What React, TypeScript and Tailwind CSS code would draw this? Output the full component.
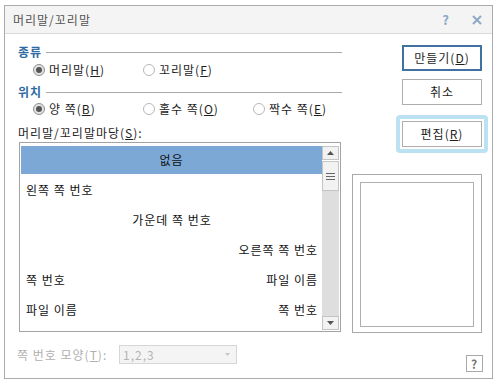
import React from 'react'

const font = { fontFamily: '"Noto Sans CJK KR", "Noto Sans", sans-serif' }

function Radio({ checked, label }: { checked?: boolean; label: React.ReactNode }) {
  return (
    <div className="w-[110px] shrink-0 flex items-center h-[16px]">
      <span
        className={
          'w-[12px] h-[12px] rounded-full border flex items-center justify-center ' +
          (checked ? 'border-[#8f8f8f] bg-[#e2e2e2]' : 'border-[#b8b8b8] bg-white')
        }
      >
        {checked && <span className="w-[6px] h-[6px] rounded-full bg-[#555555]" />}
      </span>
      <span className="ml-[4px] text-[12px] leading-[16px] text-[#1e1e1e]">{label}</span>
    </div>
  )
}

function Section({ title }: { title: string }) {
  return (
    <div className="flex items-center h-[14px]">
      <span className="text-[12px] leading-[14px] font-bold text-[#2f6aa3]">{title}</span>
      <span className="flex-1 h-px bg-[#a8a8a8] ml-[4px]" />
    </div>
  )
}

function Button({ children, primary }: { children: React.ReactNode; primary?: boolean }) {
  return (
    <div
      className={
        'w-[80px] h-[26px] flex items-center justify-center bg-white text-[12px] text-[#1e1e1e] ' +
        (primary ? 'border-2 border-[#41729f]' : 'border border-[#adadad]')
      }
    >
      {children}
    </div>
  )
}

const items: { text: string; align: 'left' | 'center' | 'right' | 'both'; right?: string }[] = [
  { text: '왼쪽 쪽 번호', align: 'left' },
  { text: '가운데 쪽 번호', align: 'center' },
  { text: '오른쪽 쪽 번호', align: 'right' },
  { text: '쪽 번호', align: 'both', right: '파일 이름' },
  { text: '파일 이름', align: 'both', right: '쪽 번호' },
]

export default function App() {
  return (
    <div className="w-[501px] h-[385px] bg-white pt-[5px] pl-[4px] tracking-[1px]" style={font}>
      <div className="w-[489px] h-[374px] border border-[#ababab] flex flex-col">
        {/* Title bar */}
        <div className="h-[28px] bg-[#f4f4f4] border-b border-[#dadada] flex items-center pl-[8px]">
          <span className="text-[12px] text-[#555555]">머리말/꼬리말</span>
          <span className="ml-auto text-[13px] font-bold text-[#8ca8c6]">?</span>
          <svg className="ml-[22px] mr-[10px]" width="10" height="10" viewBox="0 0 10 10">
            <path d="M1 1 L9 9 M9 1 L1 9" stroke="#8ca8c6" strokeWidth="2" />
          </svg>
        </div>

        {/* Body */}
        <div className="flex flex-1">
          {/* Left column */}
          <div className="ml-[13px] w-[324px] flex flex-col">
            <div className="mt-[11px]">
              <Section title="종류" />
            </div>
            <div className="mt-[3px] pl-[15px] flex">
              <Radio checked label={<>머리말(<u>H</u>)</>} />
              <Radio label={<>꼬리말(<u>F</u>)</>} />
            </div>
            <div className="mt-[7px]">
              <Section title="위치" />
            </div>
            <div className="mt-[2px] pl-[15px] flex">
              <Radio checked label={<>양 쪽(<u>B</u>)</>} />
              <Radio label={<>홀수 쪽(<u>O</u>)</>} />
              <Radio label={<>짝수 쪽(<u>E</u>)</>} />
            </div>
            <div className="mt-[9px] h-[14px] text-[12px] leading-[14px] text-[#1e1e1e]">
              머리말/꼬리말마당(<u>S</u>):
            </div>

            {/* List box */}
            <div className="mt-[2px] ml-[1px] w-[322px] h-[190px] border border-[#a3a3a3] flex">
              <div className="flex-1 pl-[1px] pt-[3px] text-[12px] text-[#111111]">
                <div className="h-[28px] mb-[1px] bg-[#7ca8d6] flex items-center justify-center">없음</div>
                {items.map((it, i) => (
                  <div
                    key={i}
                    className={
                      'h-[30px] flex items-center pl-[5px] pr-[4px] ' +
                      (it.align === 'left'
                        ? 'justify-start'
                        : it.align === 'center'
                          ? 'justify-center'
                          : it.align === 'right'
                            ? 'justify-end'
                            : 'justify-between')
                    }
                  >
                    <span>{it.text}</span>
                    {it.right && <span>{it.right}</span>}
                  </div>
                ))}
              </div>
              <div className="w-[18px] flex flex-col pt-[3px] pb-[1px] pr-[1px]">
                <div className="h-[14px] border border-[#c4c4c4] bg-[#f2f2f2] flex items-center justify-center">
                  <svg width="7" height="4" viewBox="0 0 7 4">
                    <path d="M0 4 L3.5 0 L7 4 Z" fill="#555555" />
                  </svg>
                </div>
                <div className="h-[30px] mt-[1px] border border-[#c4c4c4] bg-[#f2f2f2] flex flex-col items-center justify-center gap-[2px]">
                  <span className="w-[9px] h-px bg-[#666666]" />
                  <span className="w-[9px] h-px bg-[#666666]" />
                  <span className="w-[9px] h-px bg-[#666666]" />
                </div>
                <div className="flex-1 bg-[#dedede]" />
                <div className="h-[14px] border border-[#c4c4c4] bg-[#f2f2f2] flex items-center justify-center">
                  <svg width="7" height="4" viewBox="0 0 7 4">
                    <path d="M0 0 L3.5 4 L7 0 Z" fill="#555555" />
                  </svg>
                </div>
              </div>
            </div>

            {/* Bottom select */}
            <div className="mt-[13px] flex items-center h-[19px]">
              <span className="ml-[-1px] w-[102px] shrink-0 whitespace-nowrap text-[12px] text-[#b0b0b0]">
                쪽 번호 모양(<u>T</u>):
              </span>
              <div className="w-[118px] h-[19px] border border-[#d6d6d6] bg-[#f4f4f4] flex items-center pl-[3px] pr-[6px]">
                <span className="text-[12px] text-[#b4b4b4]">1,2,3</span>
                <svg className="ml-auto" width="5" height="3" viewBox="0 0 5 3">
                  <path d="M0 0 L2.5 3 L5 0 Z" fill="#c6c6c6" />
                </svg>
              </div>
            </div>
          </div>

          {/* Right column */}
          <div className="ml-[10px] w-[130px] flex flex-col">
            <div className="mt-[11px] ml-[50px]">
              <Button primary>
                만들기(<u>D</u>)
              </Button>
            </div>
            <div className="mt-[8px] ml-[50px]">
              <Button>취소</Button>
            </div>
            <div className="mt-[10px] ml-[44px] w-[92px] border-4 border-[#bce1f3] rounded-[4px] p-[2px]">
              <Button>
                편집(<u>R</u>)
              </Button>
            </div>
            <div className="mt-[21px] w-[130px] h-[159px] border border-[#a8a8a8] px-[7px] pt-[7px] pb-[5px]">
              <div className="w-full h-full border border-[#b0b0b0]" />
            </div>
            <div className="mt-[22px] ml-[114px] w-[17px] h-[17px] border border-[#a8a8a8] flex items-center justify-center text-[12px] font-bold text-[#777777]">
              ?
            </div>
          </div>
        </div>
      </div>
    </div>
  )
}
